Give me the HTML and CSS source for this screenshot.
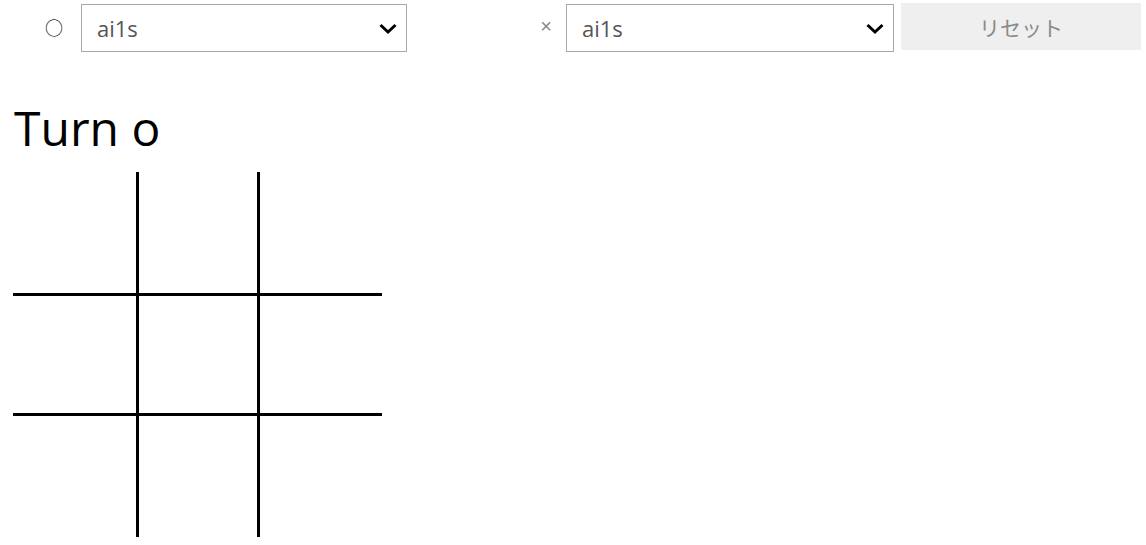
FILE: index.html
```html
<!DOCTYPE html>
<html lang="ja">
<head>
  <meta charset="UTF-8">
  <title>Tic Tac Toe</title>
  <link rel="stylesheet" href="styles.css">
</head>
<body>

<div class="controls">
  <span class="mark mark-o">○</span>
  <div class="select-wrap select-o">
    <select id="player-o">
      <option>ai1s</option>
      <option>human</option>
    </select>
    <svg class="chevron" width="20" height="12" viewBox="0 0 20 12"><polyline points="2.5,2 10,9 17.5,2" fill="none" stroke="#000" stroke-width="3"/></svg>
  </div>
  <span class="mark mark-x">×</span>
  <div class="select-wrap select-x">
    <select id="player-x">
      <option>ai1s</option>
      <option>human</option>
    </select>
    <svg class="chevron" width="20" height="12" viewBox="0 0 20 12"><polyline points="2.5,2 10,9 17.5,2" fill="none" stroke="#000" stroke-width="3"/></svg>
  </div>
  <button class="reset-btn" disabled>リセット</button>
</div>

<div class="status">Turn o</div>

<!-- Board -->
<div class="board">
  <div class="cell"></div><div class="cell"></div><div class="cell"></div>
  <div class="cell"></div><div class="cell"></div><div class="cell"></div>
  <div class="cell"></div><div class="cell"></div><div class="cell"></div>
</div>

</body>
</html>
```

FILE: styles.css
```css
body { margin: 0; background: #fff; font-family: "Open Sans", "Noto Sans CJK JP", sans-serif; }
.controls { display: flex; align-items: center; padding: 3px 0 0 8px; height: 50px; box-sizing: border-box; }
.mark { display: inline-block; width: 14px; text-align: center; color: #222; }
.mark-o { margin-left: 37px; margin-right: 22px; font-size: 18px; font-family: "Noto Sans CJK JP", sans-serif; }
.mark-x { margin-left: 132px; margin-right: 13px; font-size: 20px; color: #888; font-family: "Liberation Sans", sans-serif; }
.select-wrap { position: relative; margin-top: 2px; }
.select-wrap select { appearance: none; -webkit-appearance: none; height: 48px; border: 1px solid #a6a6a6; border-radius: 0; background: #fff; padding: 0 0 0 15px; font-family: "Open Sans", sans-serif; font-size: 22px; color: #555; outline: none; }
.select-o select { width: 326px; }
.select-x select { width: 328px; }
.chevron { position: absolute; right: 9px; top: 19px; pointer-events: none; }
.reset-btn { margin-left: 7px; width: 240px; height: 47px; border: none; background: #efefef; color: #8a8a8a; font-family: "Noto Sans CJK JP", sans-serif; font-size: 21px; }
.status { margin: 54px 0 0 14px; font-size: 48px; line-height: 48px; color: #000; }
.board { display: grid; grid-template-columns: 123px 118px 122px; grid-template-rows: 121px 117px 121px; gap: 3px; background: #000; width: 369px; margin: 20px 0 0 13px; }
.cell { background: #fff; }
```
